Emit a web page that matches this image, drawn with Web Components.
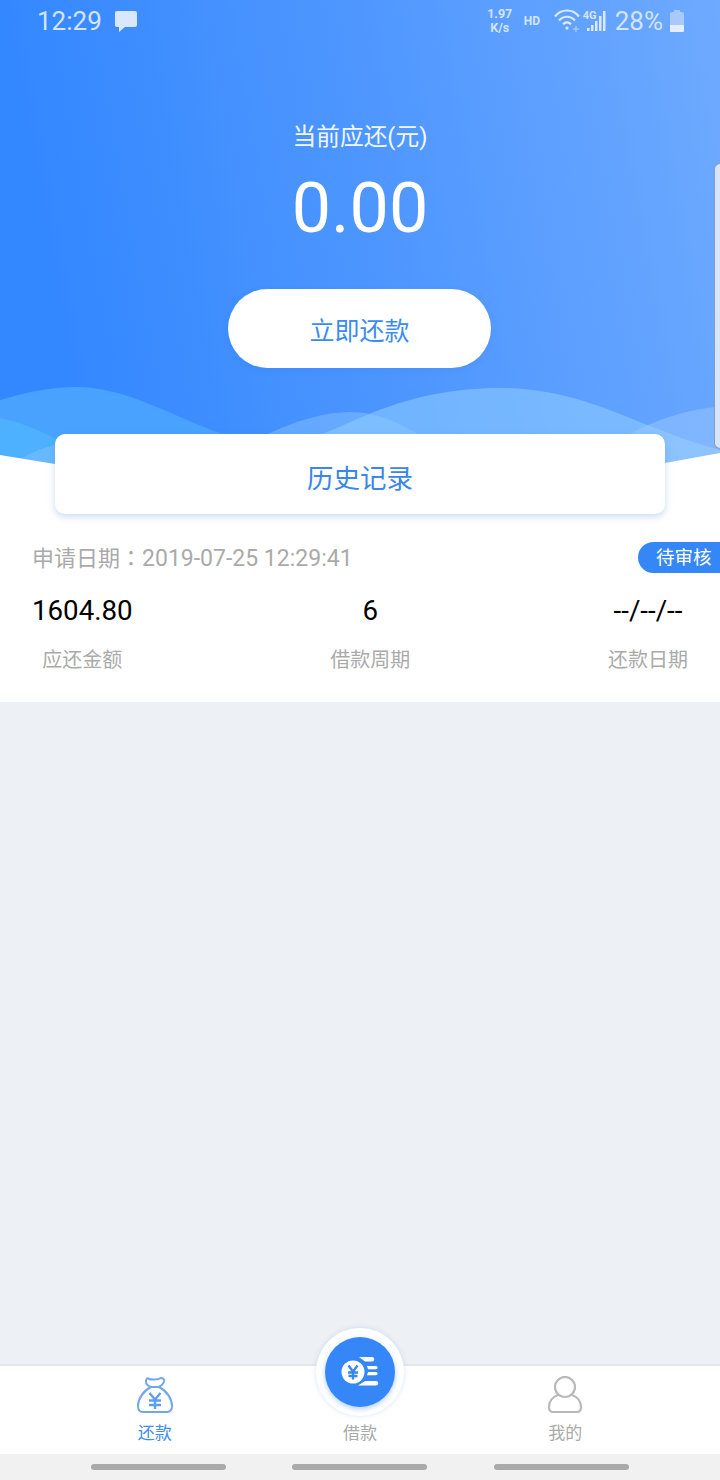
<!DOCTYPE html>
<html lang="zh"><head><meta charset="utf-8"><title>还款</title>
<style>
html,body{margin:0;padding:0}
body{width:720px;height:1480px;overflow:hidden;font-family:Roboto,"Noto Sans CJK SC",sans-serif;background:#edf0f4}
app-shell{display:flex}
</style></head><body>
<app-shell>
  <hero-panel>
    <status-bar slot="status"></status-bar>
    <span slot="label">当前应还(元)</span>
    <span slot="amount">0.00</span>
    <span slot="action">立即还款</span>
  </hero-panel>
  <history-card>历史记录</history-card>
  <loan-record date-label="申请日期" date="2019-07-25 12:29:41" state="待审核">
    <record-stat value="1604.80" label="应还金额"></record-stat>
    <record-stat value="6" label="借款周期"></record-stat>
    <record-stat value="--/--/--" label="还款日期"></record-stat>
  </loan-record>
  <tab-bar></tab-bar>
  <nav-pills></nav-pills>
</app-shell>
<script>
function def(name,html,init){
  customElements.define(name,class extends HTMLElement{
    constructor(){super();this.attachShadow({mode:'open'}).innerHTML=html}
    connectedCallback(){if(init)init.call(this,this.shadowRoot)}
  });
}
def('app-shell',`<style>:host{display:flex;flex-direction:column;width:720px;height:1480px;position:relative}</style><slot></slot>`);

def('hero-panel',`<style>
:host{display:block;height:470px;position:relative;overflow:hidden;color:#fff;flex:none}
.bg{position:absolute;inset:0;width:720px;height:470px;display:block}
.content{position:relative;display:flex;flex-direction:column;align-items:center}
.status{align-self:stretch}
.label{font-size:23.700px;line-height:30px;margin-top:80px;color:#f2f7ff}
.amount{font-size:70px;line-height:84px;margin-top:14px}
.btn{margin-top:39px;margin-right:1px;width:263px;height:79px;box-sizing:border-box;border-radius:40px;background:#fff;color:#3a8bf3;font-size:25px;display:flex;align-items:center;justify-content:center;box-shadow:0 2px 6px rgba(40,110,220,.12)}
.handle{position:absolute;right:0;top:163px;width:5px;height:284px;background:#d6e5fb;border:1px solid #8b9cb5;border-right:0;border-radius:7px 0 0 7px}
</style>
<svg class="bg" viewBox="0 0 720 470" aria-hidden="true">
<defs><linearGradient id="g" x1="0" y1="0.12" x2="1" y2="0"><stop offset="0" stop-color="#3387ff"/><stop offset=".5" stop-color="#4f97ff"/><stop offset="1" stop-color="#6eaaff"/></linearGradient></defs>
<rect width="720" height="470" fill="url(#g)"/>
<path d="M0 400C28 392 52 387 76 387C125 387 170 415 222 434L240 470H0Z" fill="#4aa2ff"/>
<path d="M0 418C22 423 42 431 60 441L80 470H0Z" fill="#4db1ff"/>
<path d="M20 459C32 452 45 447 58 444L80 470H20Z" fill="#66b8ff"/>
<path d="M268 434C295 421 325 412 350 412C378 412 398 423 418 434L430 470H268Z" fill="#90cdff" fill-opacity=".4"/>
<path d="M322 434C350 425 405 388 500 388C560 388 605 408 650 426C675 436 695 443 720 450V470H322Z" fill="#90cdff" fill-opacity=".55"/>
<path d="M630 434C655 420 690 408 720 407V470H630Z" fill="#a8d0ff" fill-opacity=".4"/>
<path d="M0 455L55 464C200 478 520 478 665 463L720 453V470H0Z" fill="#fff"/>
</svg>
<div class="handle"></div>
<div class="content">
<div class="status"><slot name="status"></slot></div>
<div class="label"><slot name="label"></slot></div>
<div class="amount"><slot name="amount"></slot></div>
<div class="btn"><slot name="action"></slot></div>
</div>`);

def('status-bar',`<style>
:host{display:flex;align-items:center;height:42px;padding:0 35px 0 37px;color:#d4e4ff;font-family:Roboto,sans-serif;font-size:26px}
svg{display:block;flex:none}
.time{margin-right:12px}
.sp{flex:1}
.speed{font-size:12.500px;line-height:14px;font-weight:700;text-align:center;width:28px;margin-right:10px}
.speed span{display:block}
.hd{font-size:12px;font-weight:700;width:18px;margin-right:12px}
.wifi{margin-right:1px}
.sig{position:relative;width:24px;height:24px}
.sig b{position:absolute;left:0;top:1px;font-size:11px;line-height:11px}
.sig svg{position:absolute;left:0;top:0}
.pct{margin-left:8px;margin-right:6px}
</style>
<span class="time">12:29</span>
<svg width="24" height="22" viewBox="0 0 24 22"><path d="M3 1h18a2 2 0 0 1 2 2v12a2 2 0 0 1-2 2H11l-6 5v-5H3a2 2 0 0 1-2-2V3a2 2 0 0 1 2-2z" fill="#d9e7ff"/></svg>
<span class="sp"></span>
<span class="speed"><span>1.97</span><span>K/s</span></span>
<span class="hd">HD</span>
<svg class="wifi" width="28" height="24" viewBox="0 0 28 24" fill="none" stroke="#dbe8ff" stroke-width="2.200"><path d="M1 7.500C7-.5 19-.5 25 7.500"/><path d="M5 11.500C9.500 6.500 16.500 6.500 21 11.500"/><path d="M9 15.300C11.500 12.600 14.500 12.600 17 15.300"/><circle cx="13" cy="19" r="1.600" fill="#dbe8ff" stroke="none"/><path d="M19 20h6M22 17v6" stroke="#9fc4ff" stroke-width="1.500"/></svg>
<span class="sig"><b>4G</b><svg width="24" height="24" viewBox="0 0 24 24" fill="#dbe8ff"><rect x="4" y="19" width="2.500" height="3"/><rect x="8" y="16" width="2.500" height="6"/><rect x="12" y="12" width="2.500" height="10"/><rect x="16" y="7" width="2.500" height="15"/><rect x="20" y="2" width="2.500" height="20"/></svg></span>
<span class="pct">28%</span>
<svg width="16" height="22" viewBox="0 0 16 22"><rect x="5" y="0" width="6" height="3" fill="#a9c9fb"/><rect x="1" y="2" width="14" height="20" rx="2" fill="#a9c9fb"/><rect x="1" y="15" width="14" height="7" rx="1" fill="#e3eeff"/></svg>`);

def('history-card',`<style>
:host{display:block;flex:none;position:relative;box-sizing:border-box;height:80px;margin-top:-36px;padding:0 55px;background:linear-gradient(transparent 36px,#fff 36px)}
.card{height:80px;box-sizing:border-box;padding-top:5px;display:flex;align-items:center;justify-content:center;border-radius:10px;background:#fff;color:#3a86ea;font-size:26.500px;box-shadow:0 3px 7px rgba(70,130,220,.28)}
</style><div class="card"><slot></slot></div>`);

def('loan-record',`<style>
:host{display:block;background:#fff;height:188px;flex:none}
.top{display:flex;justify-content:space-between;align-items:center;height:31px;margin-top:28px;padding-left:32px}
.date{font-size:22px;color:#aaa;line-height:31px}
.colon{font-family:"Noto Sans CJK TC",sans-serif}
.num{font-size:23px}
.state{width:82px;height:31px;box-sizing:border-box;padding:1px 0 0 18px;line-height:31px;background:#3587f7;color:#fff;font-size:18.500px;border-radius:16px 0 0 16px}
.row{display:flex;justify-content:space-between;padding:0 32px;margin-top:21px}
</style>
<div class="top"><span class="date"><span class="lb"></span><span class="colon" lang="zh-Hant">：</span><span class="num"></span></span><span class="state"></span></div>
<div class="row"><slot></slot></div>`,function(r){
  r.querySelector('.lb').textContent=this.getAttribute('date-label');
  r.querySelector('.num').textContent=this.getAttribute('date');
  r.querySelector('.state').textContent=this.getAttribute('state');
});

def('record-stat',`<style>
:host{display:flex;flex-direction:column;align-items:center}
.v{font-size:27.700px;line-height:34px;color:#000}
.l{font-size:20px;line-height:28px;color:#aaa;margin-top:18px}
</style><span class="v"></span><span class="l"></span>`,function(r){
  r.querySelector('.v').textContent=this.getAttribute('value');
  r.querySelector('.l').textContent=this.getAttribute('label');
});

def('tab-bar',`<style>
:host{display:grid;grid-template-columns:repeat(3,1fr);padding:0 52px;flex:none;box-sizing:border-box;height:90px;margin-top:662px;background:#fff;border-top:2px solid #e4e6e8;position:relative;font-size:17px;color:#aaa}
.tab{display:flex;flex-direction:column;align-items:center;justify-content:flex-end;padding-bottom:10px}
.tab svg{display:block;margin-bottom:8px}
.on{color:#3f8df2}
.lab{line-height:22px}
.fab{position:absolute;left:316px;top:-38px;width:88px;height:88px;box-sizing:border-box;border-radius:50%;background:#fff;box-shadow:0 0 5px rgba(90,150,240,.25);display:flex;align-items:center;justify-content:center}
.disc{width:70px;height:70px;border-radius:50%;background:#3587f7;box-shadow:0 2px 5px rgba(53,135,247,.4);display:flex;align-items:center;justify-content:center}
</style>
<div class="tab on"><svg width="38" height="38" viewBox="0 0 38 38" fill="none"><path d="M12 2.500c3 1.500 10 1.500 13-.5 2 0 4 1.500 3 4-1 2.500-3 4-5 5h-8C12 10 10 8 10 5.500 10 3.500 11 2 12 2.500z" stroke="#74a6ec" stroke-width="2"/><path d="M15 11C7 15 2 23 2 30c0 4 2 6 5 6h24c3 0 5-2 5-6 0-7-5-15-13-19" stroke="#74a6ec" stroke-width="2"/><path d="M13.500 17l5.500 6.500 5.500-6.500M13 24.500h12M13 29h12M19 23.500V33" stroke="#5b9df7" stroke-width="2.400"/></svg><span class="lab">还款</span></div>
<div class="tab"><span class="lab">借款</span></div>
<div class="tab"><svg width="36" height="38" viewBox="0 0 36 38" fill="none" stroke="#b9b9b9" stroke-width="2.200"><circle cx="18" cy="11" r="10"/><path d="M11 19C5 21 2 26 2 31c0 3 1.500 5 4 5h24c2.500 0 4-2 4-5 0-5-3-10-9-12"/></svg><span class="lab">我的</span></div>
<div class="fab"><div class="disc"><svg width="38" height="30" viewBox="0 0 38 30"><path d="M18 0h13a2.200 2.200 0 0 1 0 4.500H24zM26 9h9a1.500 1.500 0 0 1 0 3.200H27zM27 15h8a1.500 1.500 0 0 1 0 3.200H26zM24 24h11a2.200 2.200 0 0 1 0 4.500H17z" fill="#fff"/><circle cx="12" cy="15" r="13" fill="#3587f7"/><circle cx="12" cy="15" r="11.500" fill="#fff"/><path d="M7.500 8.500l4.500 6 4.500-6M7 15.500h10M7.500 19h9M12 15v7.500" fill="none" stroke="#3587f7" stroke-width="2.300"/></svg></div></div>`);

def('nav-pills',`<style>
:host{display:block;flex:none;height:26px;background:#f1f1f1}
.w{display:flex;gap:66px;padding:10px 0 0 91px}
i{display:block;width:135px;height:6px;border-radius:3px;background:#aaa}
i:last-child{margin-left:1px}
</style><div class="w"><i></i><i></i><i></i></div>`);
</script>
</body></html>
